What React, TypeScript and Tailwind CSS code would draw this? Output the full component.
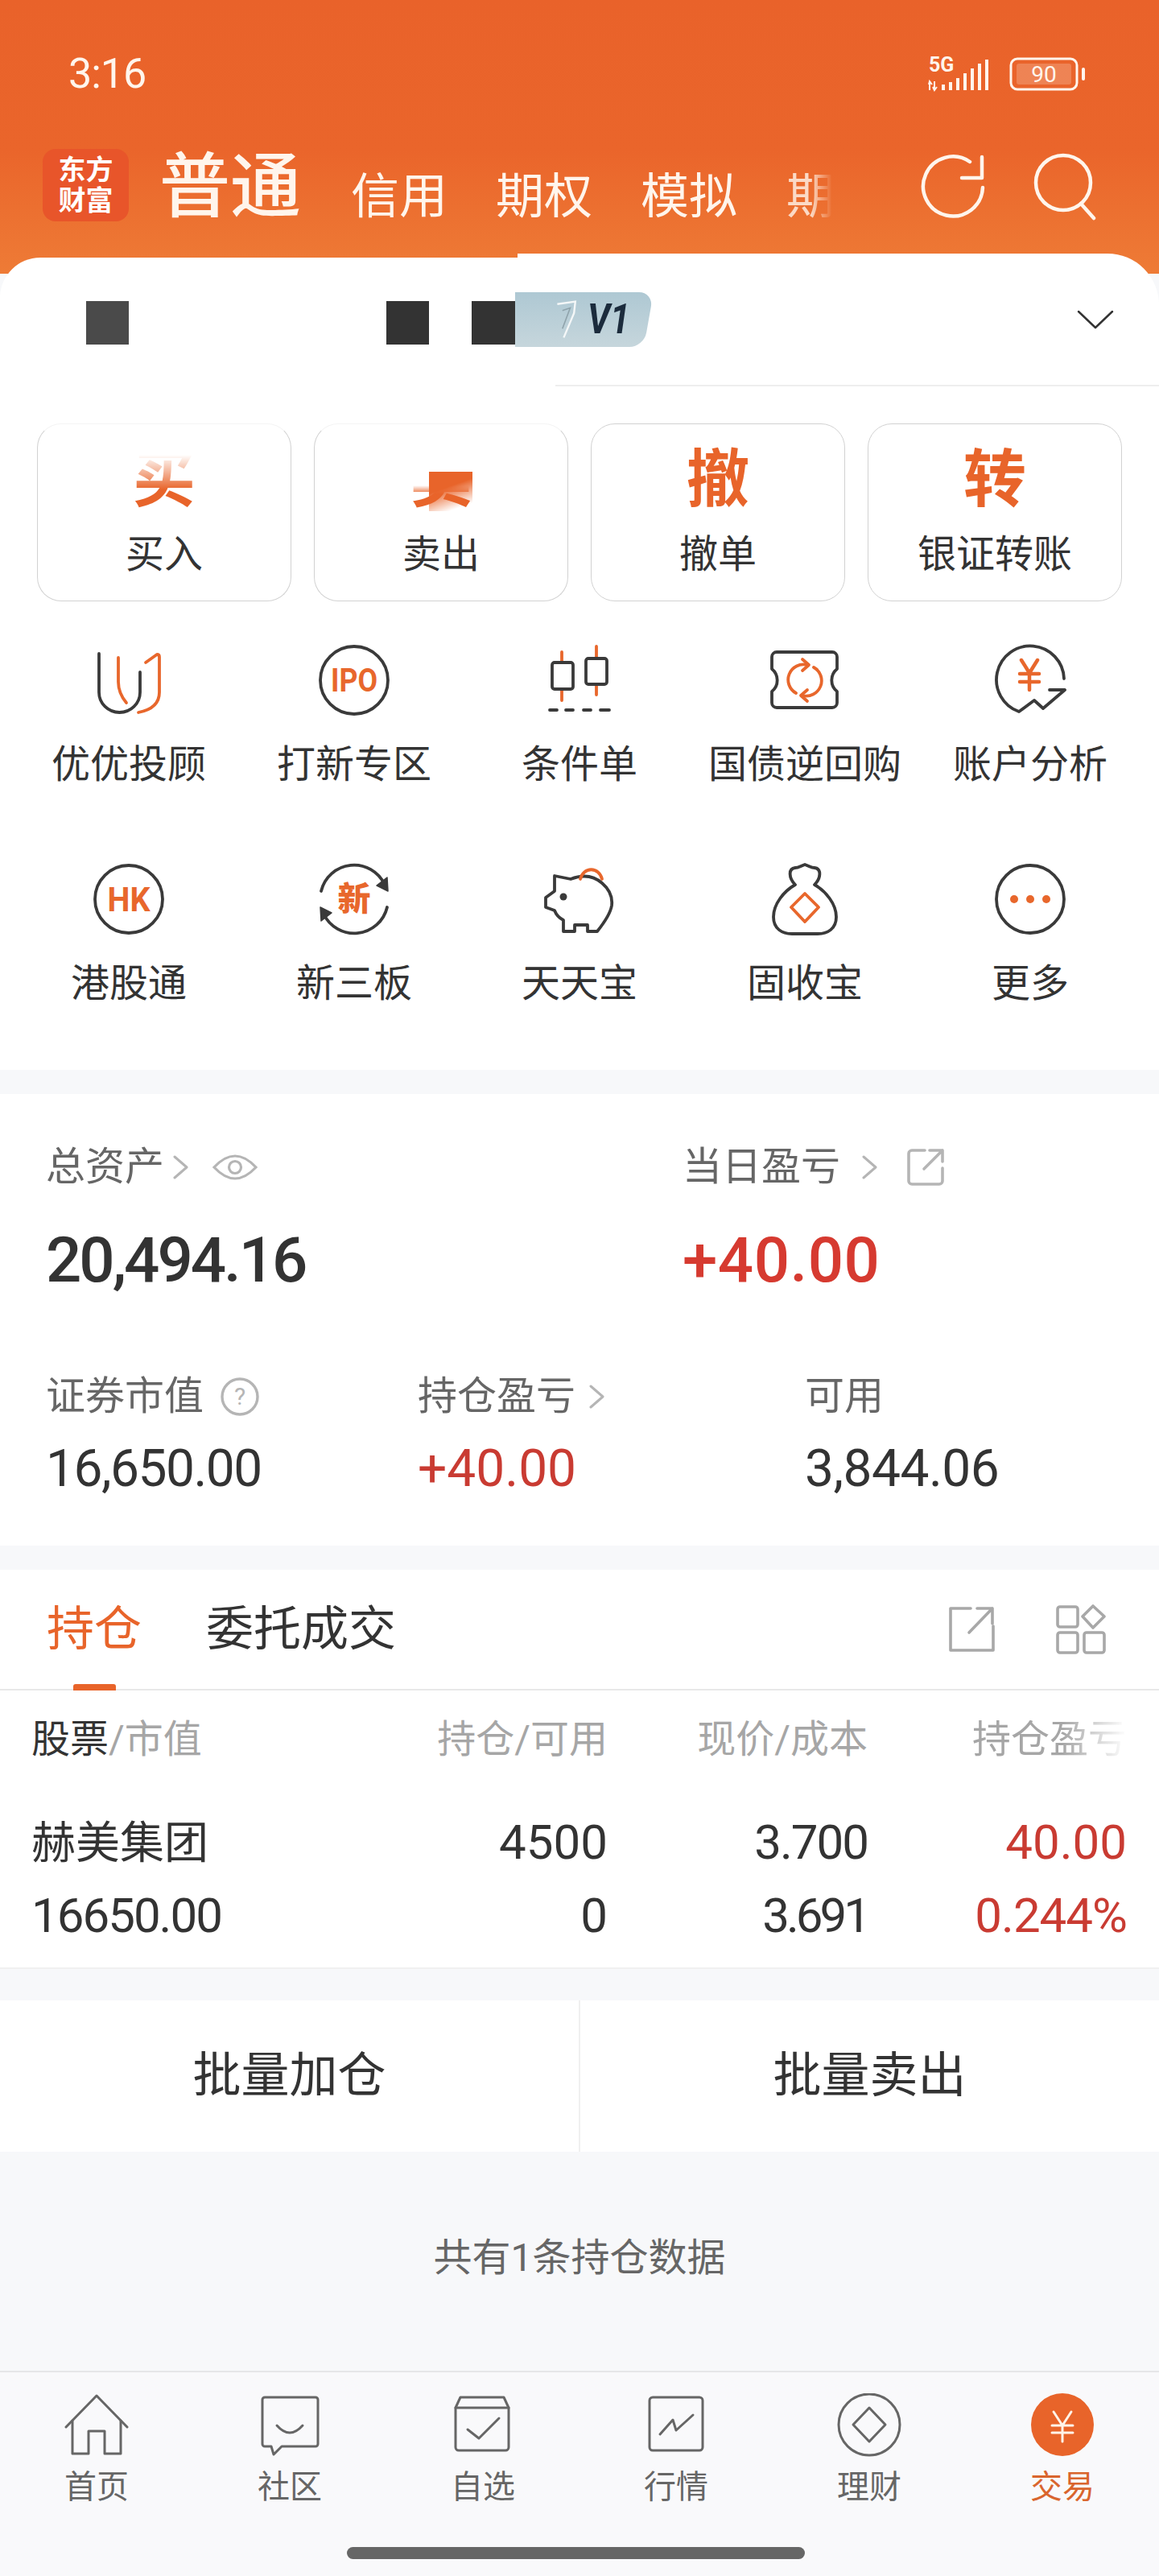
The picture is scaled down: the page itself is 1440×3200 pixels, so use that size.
const ink = '#3a3a3a';
const orange = '#e8672c';
const gray = '#b5b5b5';
const navGray = '#666666';

function Chevron({ className = '' }: { className?: string }) {
    return (
        <svg viewBox="0 0 20 30" className={`h-[30px] w-[20px] ${className}`} fill="none" stroke={gray} strokeWidth="3" strokeLinecap="round" strokeLinejoin="round">
            <path d="M3 2L18 15L3 28" />
        </svg>
    );
}

function Icon({ children }: { children: React.ReactNode }) {
    return (
        <svg viewBox="0 0 100 100" className="h-[100px] w-[100px]" fill="none" strokeWidth="3.8" strokeLinecap="round" strokeLinejoin="round">
            {children}
        </svg>
    );
}

const gridIcons: Record<string, React.ReactNode> = {
    优优投顾: (
        <Icon>
            <path d="M13 17V65a25.5 25 0 0 0 51 0V40" stroke={ink} />
            <path d="M37 22V52q0 14 10 26" stroke={orange} />
            <path d="M71 28L85 18q3 0 3 3V65q0 20-26 25" stroke={orange} />
        </Icon>
    ),
    打新专区: (
        <Icon>
            <circle cx="50" cy="50" r="42" stroke={ink} />
            <text x="50" y="64" textAnchor="middle" fontSize="40" fontWeight="700" textLength="58" lengthAdjust="spacingAndGlyphs" fill={orange} stroke="none" fontFamily="Roboto">IPO</text>
        </Icon>
    ),
    条件单: (
        <Icon>
            <path d="M28 15V28M28 61V75M71 8V23M71 55V68" stroke={orange} />
            <rect x="16" y="28" width="26" height="33" rx="3" stroke={ink} />
            <rect x="58" y="23" width="26" height="32" rx="3" stroke={ink} />
            <path d="M13 87H22M33 87H42M55 87H64M76 87H87" stroke={ink} />
        </Icon>
    ),
    国债逆回购: (
        <Icon>
            <path d="M15 15H84a6 6 0 0 1 6 6V36a18 18 0 0 0 0 28V78a6 6 0 0 1-6 6H15a6 6 0 0 1-6-6V64a18 18 0 0 0 0-28V21a6 6 0 0 1 6-6Z" stroke={ink} />
            <path d="M39 66A19 19 0 0 1 53 31M61 34A19 19 0 0 1 47 69" stroke={orange} />
            <path d="M47 24L55 31L47 38M53 62L45 69L53 76" stroke={orange} />
        </Icon>
    ),
    账户分析: (
        <Icon>
            <path d="M92 48A42 42 0 1 0 36 89L55 75L66 85L93 62H74" stroke={ink} />
            <path d="M39 25L49 41L59 25M49 41V62M37 42H61M37 52H61" stroke={orange} strokeWidth="4.5" />
        </Icon>
    ),
    港股通: (
        <Icon>
            <circle cx="50" cy="50" r="42" stroke={ink} />
            <text x="50" y="65" textAnchor="middle" fontSize="42" fontWeight="700" textLength="53" lengthAdjust="spacingAndGlyphs" fill={orange} stroke="none" fontFamily="Roboto">HK</text>
        </Icon>
    ),
    新三板: (
        <Icon>
            <path d="M9 40A42 42 0 0 1 88 32" stroke={ink} />
            <path d="M91 60A42 42 0 0 1 12 68" stroke={ink} />
            <path d="M91 23L92 40L78 33Z M9 77L8 60L22 67Z" fill={ink} stroke={ink} strokeWidth="1.5" />
            <text x="50" y="64" textAnchor="middle" fontSize="41" fontWeight="900" fill={orange} stroke="none" fontFamily="Noto Sans CJK SC">新</text>
        </Icon>
    ),
    天天宝: (
        <Icon>
            <path d="M19 21L39 25Q62 16 78 30Q92 42 90 58Q88 70 72 90H60V82H44V90H30V76Q22 72 19 64L8 60V48L19 40Z" stroke={ink} />
            <circle cx="30" cy="47" r="4.5" fill={ink} stroke="none" />
            <path d="M51 25a14 16 0 0 1 27 0" stroke={orange} />
        </Icon>
    ),
    固收宝: (
        <Icon>
            <path d="M38 32C30 24 29 12 38 11C42 11 44 9 50 7C56 9 58 11 62 11C71 12 70 24 62 32C76 40 89 56 89 72C89 87 78 93 66 93H34C22 93 11 87 11 72C11 56 24 40 38 32Z" stroke={ink} />
            <path d="M50 43L67 60L50 78L33 60Z" stroke={orange} />
        </Icon>
    ),
    更多: (
        <Icon>
            <circle cx="50" cy="50" r="42" stroke={ink} />
            <circle cx="30" cy="50" r="5" fill={orange} stroke="none" />
            <circle cx="50" cy="50" r="5" fill={orange} stroke="none" />
            <circle cx="70" cy="50" r="5" fill={orange} stroke="none" />
        </Icon>
    ),
};

const navItems: { label: string; active?: boolean; icon: React.ReactNode }[] = [
    { label: '首页', icon: <><path d="M2 42L40 3L78 42" /><path d="M10 34V75H30V47H50V75H70V34" /></> },
    { label: '社区', icon: <><path d="M9 5H72a3 3 0 0 1 3 3V63a3 3 0 0 1-3 3H30L20 76L17 66H9a3 3 0 0 1-3-3V8a3 3 0 0 1 3-3Z" /><path d="M24 40q16 18 32 0" /></> },
    { label: '自选', icon: <><path d="M12 5H66L72 18V67a4 4 0 0 1-4 4H10a4 4 0 0 1-4-4V18Z" /><path d="M6 18H72" /><path d="M21 45L35 56L60 31" /></> },
    { label: '行情', icon: <><rect x="7" y="5" width="66" height="66" rx="4" /><path d="M20 51L36 33L40 46L61 27" /></> },
    { label: '理财', icon: <><circle cx="40" cy="39" r="38" /><path d="M40 18L60 39L40 60L20 39Z" /></> },
    {
        label: '交易',
        active: true,
        icon: (
            <>
                <circle cx="40" cy="39" r="39" fill="#e8642a" stroke="none" />
                <path d="M29 23L40 40L51 23M40 40V60M27 40H53M27 49H53" stroke="#fff3e8" />
            </>
        ),
    },
];

function BigButton({ glyph, label, faded }: { glyph: string; label: string; faded?: 'buy' | 'sell' }) {
    return (
        <div className={`relative flex h-[221px] w-[316px] flex-col items-center rounded-[30px] border-[1.5px] border-[#d2d2d2] pt-[32px] ${faded ? 'border-t-[#f4f4f4]' : ''}`}>
            <div className="relative flex h-[76px] w-[76px] justify-center">
                <div
                    className={`text-center text-[78px] leading-[76px] font-bold text-[#e8642a] ${
                        faded === 'buy'
                            ? '[mask-image:linear-gradient(to_top,black_35%,transparent_92%)]'
                            : faded === 'sell'
                              ? '[mask-image:linear-gradient(to_top,black_28%,transparent_42%)]'
                              : ''
                    }`}
                >
                    {glyph}
                </div>
                {faded === 'sell' && (
                    <div className="absolute top-[27px] left-[23px] h-[49px] w-[54px] bg-[#e8642a] [mask-image:linear-gradient(160deg,black_40%,transparent_85%)]" />
                )}
            </div>
            <div className="mt-[30px] text-[48px] leading-[48px] text-[#333]">{label}</div>
        </div>
    );
}

function Stat({ children, className = '' }: { children: React.ReactNode; className?: string }) {
    return <div className={`flex h-[48px] items-center text-[49px] leading-[48px] text-[#666] ${className}`}>{children}</div>;
}

export default function App() {
    return (
        <div className="flex h-[3200px] w-[1440px] flex-col overflow-hidden bg-[#f7f8fa] font-['Roboto','Noto_Sans_CJK_SC',sans-serif]">
            {/* orange header */}
            <div className="h-[340px] shrink-0 bg-[linear-gradient(180deg,#e9622a_0%,#ea652b_55%,#ee7b36_100%)] text-[#fff5ec]">
                <div className="flex h-[185px] items-start justify-between pt-[65px] pr-[88px] pl-[85px]">
                    <span className="text-[52px] leading-[54px] tracking-[-1px]">3:16</span>
                    <svg viewBox="0 0 202 50" className="h-[50px] w-[202px]" fill="none" stroke="#fff5ec">
                        <text x="4" y="24" fontSize="25" fontWeight="700" fill="#fff5ec" stroke="none" fontFamily="Roboto">5G</text>
                        <path d="M5 36V47M11 47V36M4 40L5 36L8 40M9 43L11 47L14 43" strokeWidth="2" />
                        <path d="M22 47V40M31 47V37M40 47V32M49 47V26M58 47V20M67 47V14M76 47V9" strokeWidth="4" />
                        <rect x="106" y="8" width="82" height="38" rx="8" strokeWidth="3" />
                        <rect x="113" y="14" width="68" height="26" rx="3" fill="#fff5ec" fillOpacity="0.22" stroke="none" />
                        <text x="147" y="37" textAnchor="middle" fontSize="28" fill="#fff5ec" stroke="none" fontFamily="Roboto">90</text>
                        <path d="M196 21V33" strokeWidth="4" strokeLinecap="round" />
                    </svg>
                </div>
                <div className="flex items-end">
                    <div className="ml-[53px] flex h-[90px] w-[107px] flex-col items-center justify-center rounded-[16px] bg-[#e8552a] text-[34px] leading-[38px] font-bold text-white">
                        <span>东方</span>
                        <span>财富</span>
                    </div>
                    <span className="mb-[-2px] ml-[38px] text-[88px] leading-[90px] font-medium">普通</span>
                    <span className="ml-[62px] text-[60px] leading-[60px]">信用</span>
                    <span className="ml-[60px] text-[60px] leading-[60px]">期权</span>
                    <span className="ml-[60px] text-[60px] leading-[60px]">模拟</span>
                    <span className="ml-[61px] w-[60px] text-[60px] leading-[60px] [mask-image:linear-gradient(to_right,rgba(0,0,0,0.8)_50%,rgba(0,0,0,0)_95%)]">期</span>
                    <svg viewBox="0 0 90 90" className="ml-[102px] h-[90px] w-[90px]" fill="none" stroke="#fff5ec" strokeWidth="4.5" strokeLinecap="round" strokeLinejoin="round">
                        <path d="M82 48A37 37 0 1 1 66 16" />
                        <path d="M81 10V36H56" />
                    </svg>
                    <svg viewBox="0 0 90 90" className="ml-[50px] h-[90px] w-[90px]" fill="none" stroke="#fff5ec" strokeWidth="4.5" strokeLinecap="round">
                        <circle cx="42" cy="42" r="34" />
                        <path d="M64 68L80 86" />
                    </svg>
                </div>
            </div>

            {/* account + actions */}
            <div className="relative mt-[-20px] rounded-tl-[50px] rounded-tr-[64px] bg-white pb-[83px]">
                {/* lifted right part of the card edge */}
                <div className="absolute top-[-5px] right-0 h-[70px] w-[797px] rounded-tr-[64px] bg-white" />
                <div className="relative flex h-[160px] items-start pt-[54px]">
                    <div className="ml-[107px] h-[54px] w-[53px] bg-[#4a4a4a]" />
                    <div className="ml-[320px] h-[54px] w-[53px] bg-[#333]" />
                    <div className="ml-[53px] h-[54px] w-[54px] bg-[#333]" />
                    <div className="relative mt-[-11px] h-[68px] w-[176px] overflow-hidden">
                        <div className="absolute inset-y-0 left-[-20px] w-[186px] -skew-x-[10deg] rounded-r-[18px] bg-[linear-gradient(180deg,#aec8d3,#c6d6dc)]" />
                        <svg viewBox="0 0 50 68" className="absolute top-0 left-[46px] h-[68px] w-[40px]" fill="none" stroke="#f4f7f8" strokeWidth="3">
                            <path d="M8 10L36 6L34 24L18 62" />
                            <path d="M16 20L28 16L16 48" stroke="#8fa3ab" strokeWidth="2" />
                        </svg>
                        <span className="absolute top-[8px] left-[90px] origin-left text-[52px] leading-[52px] font-bold text-[#1b2b3c] italic [transform:scaleX(0.85)]">V1</span>
                    </div>
                    <svg viewBox="0 0 46 24" className="absolute top-[65px] right-[56px] h-[24px] w-[46px]" fill="none" stroke="#333" strokeWidth="2.5" strokeLinecap="round" strokeLinejoin="round">
                        <path d="M2 2L23 22L44 2" />
                    </svg>
                    <div className="absolute right-0 bottom-0 h-[2px] w-[750px] bg-[#eeeeee]" />
                </div>

                <div className="relative mt-[46px] flex justify-between px-[46px]">
                    <BigButton glyph="买" label="买入" faded="buy" />
                    <BigButton glyph="卖" label="卖出" faded="sell" />
                    <BigButton glyph="撤" label="撤单" />
                    <BigButton glyph="转" label="银证转账" />
                </div>

                <div className="relative mt-[48px] grid grid-cols-[repeat(5,280px)] gap-y-[93px] pl-[20px]">
                    {Object.keys(gridIcons).map((name) => (
                        <div key={name} className="flex flex-col items-center">
                            {gridIcons[name]}
                            <div className="mt-[31px] text-[48px] leading-[48px] whitespace-nowrap text-[#333]">{name}</div>
                        </div>
                    ))}
                </div>
            </div>

            {/* assets */}
            <div className="mt-[30px] bg-white pt-[67px] pr-[58px] pb-[65px] pl-[57px]">
                <div className="flex">
                    <div className="w-[791px]">
                        <Stat>
                            总资产
                            <Chevron className="ml-[10px]" />
                            <svg viewBox="0 0 56 38" className="ml-[30px] h-[38px] w-[56px]" fill="none" stroke={gray} strokeWidth="3.2">
                                <path d="M2 19Q28 -9 54 19Q28 47 2 19Z" />
                                <circle cx="28" cy="19" r="7.5" />
                            </svg>
                        </Stat>
                        <div className="mt-[56px] text-[78px] leading-[72px] font-medium tracking-[-3px] text-[#333]">20,494.16</div>
                    </div>
                    <div>
                        <Stat>
                            当日盈亏
                            <Chevron className="ml-[26px]" />
                            <svg viewBox="0 0 48 48" className="ml-[36px] h-[48px] w-[48px]" fill="none" stroke={gray} strokeWidth="3.6" strokeLinecap="round" strokeLinejoin="round">
                                <path d="M23 3H7a4 4 0 0 0-4 4V41a4 4 0 0 0 4 4H41a4 4 0 0 0 4-4V25" />
                                <path d="M22 26L45 3M29 3H45V17" />
                            </svg>
                        </Stat>
                        <div className="mt-[56px] text-[78px] leading-[72px] font-medium tracking-[0.5px] text-[#d63a30]">+40.00</div>
                    </div>
                </div>
                <div className="mt-[109px] flex">
                    <div className="w-[462px]">
                        <Stat>
                            证券市值
                            <svg viewBox="0 0 48 48" className="ml-[21px] h-[48px] w-[48px]" fill="none" stroke={gray} strokeWidth="3.4">
                                <circle cx="24" cy="24" r="22" />
                                <text x="24" y="34" textAnchor="middle" fontSize="30" fill={gray} stroke="none" fontFamily="Roboto">?</text>
                            </svg>
                        </Stat>
                        <div className="mt-[36px] text-[64px] leading-[60px] tracking-[-1.5px] text-[#333]">16,650.00</div>
                    </div>
                    <div className="w-[481px]">
                        <Stat>
                            持仓盈亏
                            <Chevron className="ml-[16px]" />
                        </Stat>
                        <div className="mt-[36px] text-[64px] leading-[60px] text-[#c93b32]">+40.00</div>
                    </div>
                    <div>
                        <Stat>可用</Stat>
                        <div className="mt-[36px] text-[64px] leading-[60px] tracking-[-0.5px] text-[#333]">3,844.06</div>
                    </div>
                </div>
            </div>

            {/* positions */}
            <div className="mt-[30px] border-b-2 border-[#f0f0f0] bg-white">
                <div className="relative flex h-[150px] items-center border-b-2 border-[#e8e8e8] pr-[66px] pl-[58px] text-[59px] leading-[60px]">
                    <span className="text-[#e8642a]">持仓</span>
                    <span className="ml-[80px] text-[#333]">委托成交</span>
                    <div className="absolute bottom-[-2px] left-[91px] h-[8px] w-[53px] rounded-t-[3px] bg-[#e8642a]" />
                    <svg viewBox="0 0 58 60" className="ml-auto h-[60px] w-[58px]" fill="none" stroke="#a8a8a8" strokeWidth="3.6" strokeLinejoin="round" strokeLinecap="round">
                        <path d="M28 4H3V56H56V26" />
                        <path d="M26 34L55 4M36 4H55V23" />
                    </svg>
                    <svg viewBox="0 0 62 62" className="ml-[76px] h-[62px] w-[62px]" fill="none" stroke="#a8a8a8" strokeWidth="3.6" strokeLinejoin="round">
                        <rect x="2" y="3" width="25" height="25" rx="3" />
                        <path d="M46 2L60 15L46 29L33 15Z" />
                        <rect x="2" y="35" width="25" height="25" rx="3" />
                        <rect x="35" y="35" width="25" height="25" rx="3" />
                    </svg>
                </div>
                <div className="grid grid-cols-[455px_260px_323px_322px] pt-[37px] pl-[40px] text-[48px] leading-[48px] text-[#a6a6a6]">
                    <div className="ml-[-1px]"><span className="text-[#333]">股票</span>/市值</div>
                    <div className="text-right">持仓/可用</div>
                    <div className="text-right">现价/成本</div>
                    <div className="text-right [mask-image:linear-gradient(to_right,black_75%,transparent_100%)]">持仓盈亏</div>
                </div>
                <div className="mt-[75px] grid grid-cols-[455px_260px_323px_322px] pl-[40px] text-[60px] leading-[58px] text-[#333]">
                    <div className="ml-[-1px] text-[55px]">赫美集团</div>
                    <div className="text-right">4500</div>
                    <div className="text-right tracking-[-2px]">3.700</div>
                    <div className="text-right text-[#c93b32]">40.00</div>
                </div>
                <div className="mt-[33px] grid grid-cols-[455px_260px_323px_322px] pb-[35px] pl-[40px] text-[60px] leading-[58px] text-[#333]">
                    <div className="ml-[-1px] tracking-[-2px]">16650.00</div>
                    <div className="text-right">0</div>
                    <div className="text-right tracking-[-4px]">3.691</div>
                    <div className="text-right tracking-[-1px] text-[#c93b32]">0.244%</div>
                </div>
            </div>

            <div className="mt-[39px] flex h-[188px] bg-white text-[60px] leading-[60px] text-[#333]">
                <div className="flex flex-1 items-center justify-center">批量加仓</div>
                <div className="w-[2px] bg-[#f0f0f0]" />
                <div className="flex flex-1 items-center justify-center">批量卖出</div>
            </div>

            <div className="flex h-[272px] justify-center pt-[108px] text-[48px] leading-[48px] text-[#666]">共有1条持仓数据</div>

            {/* bottom nav */}
            <div className="flex-1 border-t-2 border-[#e6e6e8] bg-[#f9f9fb] pt-[26px]">
                <div className="grid grid-cols-6">
                    {navItems.map((item) => (
                        <div key={item.label} className="flex flex-col items-center">
                            <svg viewBox="0 0 80 80" className="h-[80px] w-[80px]" fill="none" stroke={navGray} strokeWidth="3" strokeLinejoin="round" strokeLinecap="round">
                                {item.icon}
                            </svg>
                            <div className={`mt-[16px] text-[40px] leading-[42px] ${item.active ? 'text-[#d9652e]' : 'text-[#666]'}`}>{item.label}</div>
                        </div>
                    ))}
                </div>
                <div className="mt-[53px] ml-[431px] h-[15px] w-[569px] rounded-full bg-[#666]" />
            </div>
        </div>
    );
}
